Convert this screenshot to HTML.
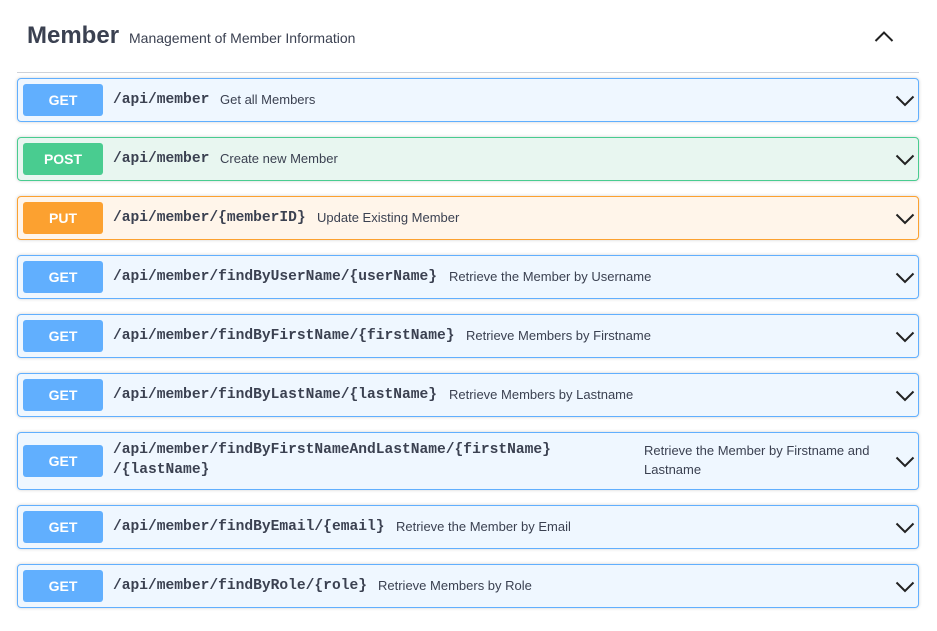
<!DOCTYPE html>
<html><head><style>
body{margin:0;background:#fff;width:937px;height:631px;position:relative;overflow:hidden;font-family:"Liberation Sans",Arial,sans-serif;color:#3b4151}
.t{position:absolute;left:27px;top:22px;font-size:24px;font-weight:bold;color:#3b4151}
.d{position:absolute;left:129px;top:30px;font-size:14px}
.hr{position:absolute;left:17px;top:72px;width:902px;height:1px;background:#cfd2d8}
.r{position:absolute;left:17px;width:900px;border:1px solid #61affe;background:#eff7ff;border-radius:4px;box-shadow:0 0 3px rgba(0,0,0,.19)}
.b{position:absolute;left:5px;width:80px;height:32px;border-radius:3px;background:#61affe;color:#fff;font-weight:bold;font-size:14px;text-align:center;line-height:32px}
.p{position:absolute;left:95px;font-family:"Liberation Mono",monospace;font-weight:bold;font-size:14.6px;color:#3b4151;white-space:nowrap}
.s{position:absolute;font-size:13px;color:#3b4151;white-space:nowrap}
.c{position:absolute;right:3px;width:20px;height:12px}
.post{border-color:#49cc90;background:#e8f6f0}.post .b{background:#49cc90}
.put{border-color:#fca130;background:#fff5ea}.put .b{background:#fca130}
</style></head><body>
<div class="t">Member</div><div class="d">Management of Member Information</div>
<svg style="position:absolute;left:874px;top:30px" width="20" height="12"><path d="M1.5 11 L10 2.5 L18.5 11" stroke="#222" stroke-width="2" fill="none"/></svg>
<div class="hr"></div>

<div class="r" style="top:78px;height:42px"><div class="b" style="top:5px">GET</div><div class="p" style="top:13px">/api/member</div><div class="s" style="left:202px;top:13px">Get all Members</div><svg class="c" style="top:16px"><path d="M1.5 1.5 L10 10 L18.5 1.5" stroke="#222" stroke-width="2" fill="none"/></svg></div>

<div class="r post" style="top:137px;height:42px"><div class="b" style="top:5px">POST</div><div class="p" style="top:13px">/api/member</div><div class="s" style="left:202px;top:13px">Create new Member</div><svg class="c" style="top:16px"><path d="M1.5 1.5 L10 10 L18.5 1.5" stroke="#222" stroke-width="2" fill="none"/></svg></div>

<div class="r put" style="top:196px;height:42px"><div class="b" style="top:5px">PUT</div><div class="p" style="top:13px">/api/member/{memberID}</div><div class="s" style="left:299px;top:13px">Update Existing Member</div><svg class="c" style="top:16px"><path d="M1.5 1.5 L10 10 L18.5 1.5" stroke="#222" stroke-width="2" fill="none"/></svg></div>

<div class="r" style="top:255px;height:42px"><div class="b" style="top:5px">GET</div><div class="p" style="top:13px">/api/member/findByUserName/{userName}</div><div class="s" style="left:431px;top:13px">Retrieve the Member by Username</div><svg class="c" style="top:16px"><path d="M1.5 1.5 L10 10 L18.5 1.5" stroke="#222" stroke-width="2" fill="none"/></svg></div>

<div class="r" style="top:314px;height:42px"><div class="b" style="top:5px">GET</div><div class="p" style="top:13px">/api/member/findByFirstName/{firstName}</div><div class="s" style="left:448px;top:13px">Retrieve Members by Firstname</div><svg class="c" style="top:16px"><path d="M1.5 1.5 L10 10 L18.5 1.5" stroke="#222" stroke-width="2" fill="none"/></svg></div>

<div class="r" style="top:373px;height:42px"><div class="b" style="top:5px">GET</div><div class="p" style="top:13px">/api/member/findByLastName/{lastName}</div><div class="s" style="left:431px;top:13px">Retrieve Members by Lastname</div><svg class="c" style="top:16px"><path d="M1.5 1.5 L10 10 L18.5 1.5" stroke="#222" stroke-width="2" fill="none"/></svg></div>

<div class="r" style="top:432px;height:56px"><div class="b" style="top:12px">GET</div><div class="p" style="top:7px;line-height:20px">/api/member/findByFirstNameAndLastName/{firstName}<br>/{lastName}</div><div class="s" style="left:626px;top:8px;line-height:19px">Retrieve the Member by Firstname and<br>Lastname</div><svg class="c" style="top:23px"><path d="M1.5 1.5 L10 10 L18.5 1.5" stroke="#222" stroke-width="2" fill="none"/></svg></div>

<div class="r" style="top:505px;height:42px"><div class="b" style="top:5px">GET</div><div class="p" style="top:13px">/api/member/findByEmail/{email}</div><div class="s" style="left:378px;top:13px">Retrieve the Member by Email</div><svg class="c" style="top:16px"><path d="M1.5 1.5 L10 10 L18.5 1.5" stroke="#222" stroke-width="2" fill="none"/></svg></div>

<div class="r" style="top:564px;height:42px"><div class="b" style="top:5px">GET</div><div class="p" style="top:13px">/api/member/findByRole/{role}</div><div class="s" style="left:360px;top:13px">Retrieve Members by Role</div><svg class="c" style="top:16px"><path d="M1.5 1.5 L10 10 L18.5 1.5" stroke="#222" stroke-width="2" fill="none"/></svg></div>
</body></html>
